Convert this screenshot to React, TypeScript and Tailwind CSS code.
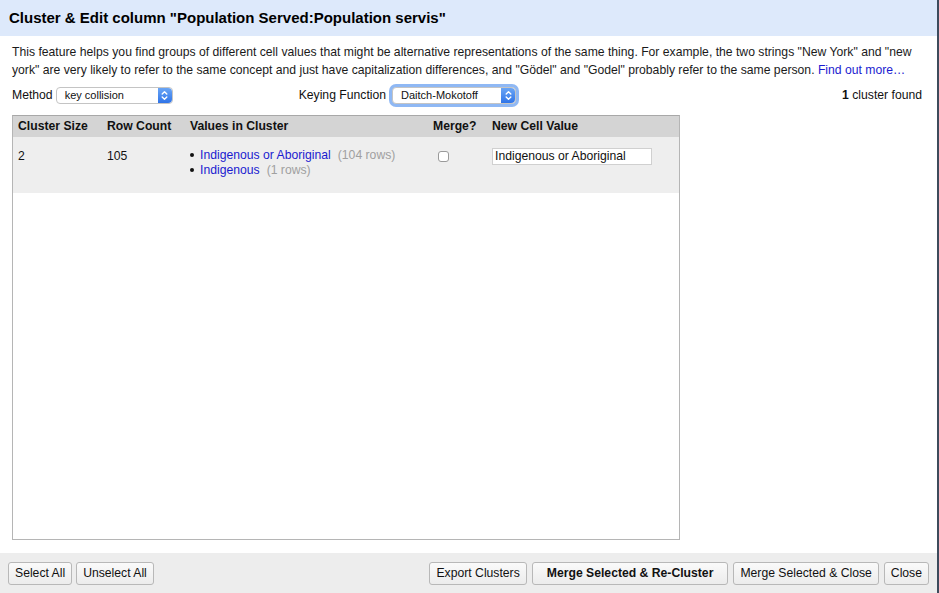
import React from 'react';

const font = { fontFamily: '"Liberation Sans", Arial, Helvetica, sans-serif' };

function Stepper() {
  return (
    <span className="flex h-full w-[14px] items-center justify-center rounded-r-[4px] bg-gradient-to-b from-[#6aa5f5] to-[#2f74e8]">
      <svg width="7" height="11" viewBox="0 0 7 11" fill="none" stroke="white" strokeWidth="1.4" strokeLinecap="round" strokeLinejoin="round">
        <path d="M1.2 4 L3.5 1.7 L5.8 4" />
        <path d="M1.2 7 L3.5 9.3 L5.8 7" />
      </svg>
    </span>
  );
}

function FakeSelect({ label, width, focused }: { label: string; width: string; focused?: boolean }) {
  return (
    <div
      className={`flex h-[17px] ${width} items-stretch rounded-[4px] border border-[#c4c4c4] bg-white ${
        focused ? 'ring-[3px] ring-[#8fb8f4]' : ''
      }`}
    >
      <span className="flex-1 pl-[8px] text-[11px] leading-[15px] text-[#111]">{label}</span>
      <Stepper />
    </div>
  );
}

function Btn({ children, bold }: { children: React.ReactNode; bold?: boolean }) {
  return (
    <button
      className={`h-[23px] rounded-[3px] border border-[#b8b8b8] bg-gradient-to-b from-[#fafafa] to-[#ececec] px-[6px] text-[12.2px] text-[#111] ${
        bold ? 'px-[14px] font-bold' : ''
      }`}
    >
      {children}
    </button>
  );
}

export default function App() {
  return (
    <div className="flex h-[593px] w-[939px] flex-col border-r-2 border-[#3d4b5c] bg-white" style={font}>
      <div className="flex h-[36px] shrink-0 items-center bg-[#dde9fb] pl-[9px]">
        <h1 className="text-[15px] font-bold text-black">Cluster &amp; Edit column "Population Served:Population servis"</h1>
      </div>

      <div className="flex flex-1 flex-col pl-[12px] pr-[8px] pt-[7px]">
        <p className="text-[12.2px] leading-[18px] text-[#1a1a1a]">
          This feature helps you find groups of different cell values that might be alternative representations of the same thing. For example, the two strings "New York" and "new york" are very likely to refer to the same concept and just have capitalization differences, and "Gödel" and "Godel" probably refer to the same person.{' '}
          <a className="text-[#1b1bd0]">Find out more…</a>
        </p>

        <div className="mt-[7px] flex h-[18px] items-center text-[12.2px] text-[#111]">
          <span className="mr-[3px]">Method</span>
          <FakeSelect label="key collision" width="w-[117px]" />
          <span className="ml-[126px] mr-[6px]">Keying Function</span>
          <FakeSelect label="Daitch-Mokotoff" width="w-[124px]" focused />
          <span className="ml-auto pr-[7px]">
            <b>1</b> cluster found
          </span>
        </div>

        <div className="mt-[11px] h-[425px] w-[668px] border border-[#b5b5b5] border-t-[#a8a8a8] bg-white">
          <div className="grid h-[21px] grid-cols-[89px_83px_243px_59px_1fr] items-center bg-[#d4d4d4] pl-[5px] text-[12.2px] font-bold text-[#111]">
            <span>Cluster Size</span>
            <span>Row Count</span>
            <span>Values in Cluster</span>
            <span>Merge?</span>
            <span>New Cell Value</span>
          </div>
          <div className="grid h-[56px] grid-cols-[89px_83px_243px_59px_1fr] items-start bg-[#eeeeee] pl-[5px] pt-[11px] text-[12.2px] text-[#111]">
            <span className="leading-[16px]">2</span>
            <span className="leading-[16px]">105</span>
            <ul className="leading-[14.5px]">
              <li className="flex items-center">
                <span className="mr-[6px] inline-block h-[4px] w-[4px] rounded-full bg-[#111]" />
                <a className="text-[#1b1bd0]">Indigenous or Aboriginal</a>
                <span className="ml-[7px] text-[#a0a0a0]">(104 rows)</span>
              </li>
              <li className="flex items-center">
                <span className="mr-[6px] inline-block h-[4px] w-[4px] rounded-full bg-[#111]" />
                <a className="text-[#1b1bd0]">Indigenous</a>
                <span className="ml-[7px] text-[#a0a0a0]">(1 rows)</span>
              </li>
            </ul>
            <span className="pl-[5px] pt-[3px]">
              <span className="block h-[11px] w-[11px] rounded-[3px] border border-[#9a9a9a] bg-white" />
            </span>
            <div className="flex h-[17px] w-[160px] items-center border border-[#d0d0d0] bg-white pl-[2px] text-[12.2px]">
              Indigenous or Aboriginal
            </div>
          </div>
        </div>
      </div>

      <div className="flex h-[40px] shrink-0 items-center bg-[#ededed] pl-[8px] pr-[8px]">
        <div className="flex gap-[4px]">
          <Btn>Select All</Btn>
          <Btn>Unselect All</Btn>
        </div>
        <div className="ml-auto flex gap-[5px]">
          <Btn>Export Clusters</Btn>
          <Btn bold>Merge Selected &amp; Re-Cluster</Btn>
          <Btn>Merge Selected &amp; Close</Btn>
          <Btn>Close</Btn>
        </div>
      </div>
    </div>
  );
}
